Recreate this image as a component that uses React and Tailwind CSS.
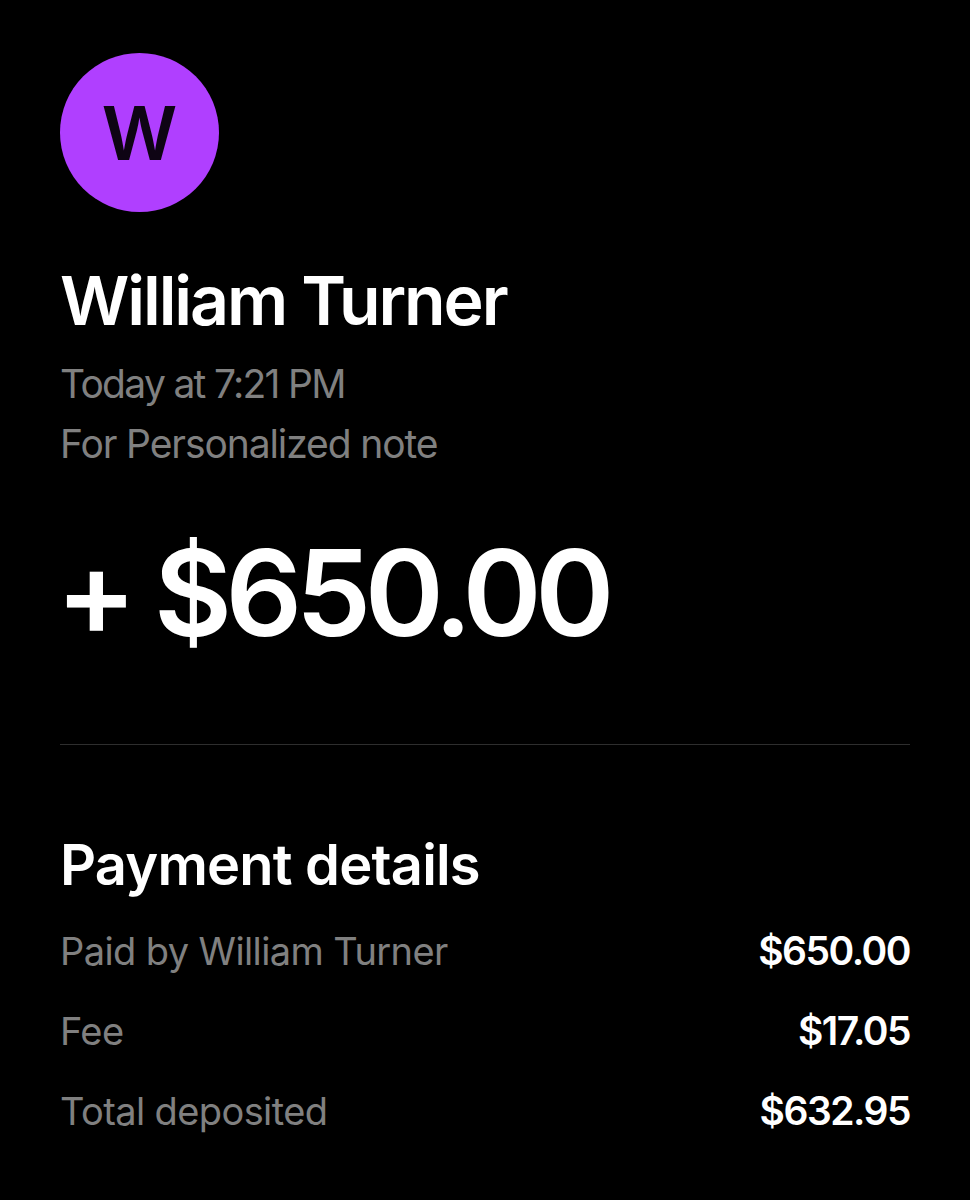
// Payment detail screen
const rows = [
  { label: 'Paid by William Turner', value: '$650.00' },
  { label: 'Fee', value: '$17.05' },
  { label: 'Total deposited', value: '$632.95' },
];

export default function App() {
  return (
    <div className="w-[970px] h-[1200px] bg-black px-[60px] pt-[53px] font-['Inter',sans-serif] overflow-hidden">
      <div className="w-[159px] h-[159px] rounded-full bg-[#b03fff] flex items-center justify-center text-[#0e0414] text-[74px] font-semibold leading-none">
        W
      </div>
      <h1 className="mt-[50px] text-white text-[68px] leading-[76px] font-semibold tracking-[-2.1px]">William Turner</h1>
      <p className="mt-[16px] text-[#808080] text-[39px] leading-[60px] tracking-[-1.7px]">Today at 7:21 PM</p>
      <p className="text-[#808080] text-[39px] leading-[60px] tracking-[-1.1px]">For Personalized note</p>
      <div className="mt-[44px] -ml-[4px] text-white text-[120px] leading-[150px] font-semibold tracking-[-6.5px]">+ $650.00</div>
      <div className="mt-[76px] border-t border-[#2e2e2e]"></div>
      <h2 className="mt-[84px] text-white text-[56px] leading-[72px] font-semibold tracking-[-0.8px]">Payment details</h2>
      <div className="mt-[10px]">
        {rows.map((row) => (
          <div key={row.label} className="flex justify-between items-center h-[80px] text-[38px]">
            <span className="text-[#808080] tracking-[-0.6px]">{row.label}</span>
            <span className="text-white text-[39px] font-semibold tracking-[-1.5px]">{row.value}</span>
          </div>
        ))}
      </div>
    </div>
  );
}
